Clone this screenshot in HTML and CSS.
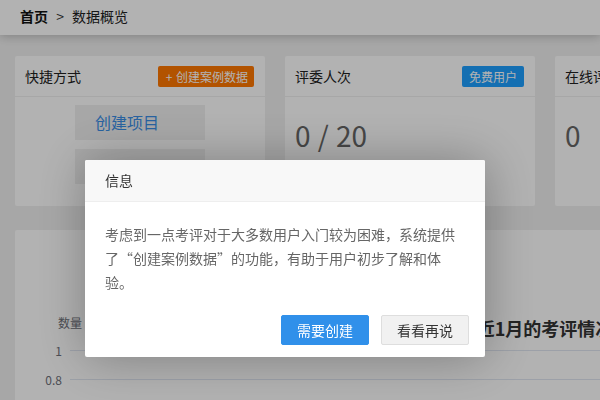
FILE: index.html
```html
<!DOCTYPE html>
<html lang="zh-CN">
<head>
<meta charset="utf-8">
<title>数据概览</title>
<link rel="stylesheet" href="styles.css">
</head>
<body>
<div class="topbar">
  <span class="crumb-home">首页</span>
  <span class="crumb-sep">&gt;</span>
  <span class="crumb-cur">数据概览</span>
</div>

<div class="main">
  <div class="cards">
    <div class="card">
      <div class="card-head">
        <span class="card-title">快捷方式</span>
        <span class="badge badge-orange">+ 创建案例数据</span>
      </div>
      <div class="quick">
        <div class="quick-btn">创建项目</div>
        <div class="quick-btn quick-btn-low">管理评委</div>
      </div>
    </div>
    <div class="card">
      <div class="card-head">
        <span class="card-title">评委人次</span>
        <span class="badge badge-blue">免费用户</span>
      </div>
      <div class="stat">0 / 20</div>
    </div>
    <div class="card">
      <div class="card-head">
        <span class="card-title">在线评委</span>
      </div>
      <div class="stat">0</div>
    </div>
    <div class="card">
      <div class="card-head">
        <span class="card-title">考评次数</span>
      </div>
      <div class="stat">0</div>
    </div>
  </div>

  <div class="chart-card">
    <div class="chart-top">
      <span class="y-name">数量</span>
      <span class="chart-title">最近1月的考评情况</span>
    </div>
    <div class="grid-row"><span class="y-label">1</span><span class="grid-line"></span></div>
    <div class="grid-row"><span class="y-label">0.8</span><span class="grid-line"></span></div>
    <div class="grid-row"><span class="y-label">0.6</span><span class="grid-line"></span></div>
  </div>
</div>

<div class="shade"></div>

<div class="dialog">
  <div class="dialog-title">信息</div>
  <div class="dialog-content">考虑到一点考评对于大多数用户入门较为困难，系统提供了“创建案例数据”的功能，有助于用户初步了解和体验。</div>
  <div class="dialog-btns">
    <span class="btn btn-primary">需要创建</span>
    <span class="btn btn-default">看看再说</span>
  </div>
</div>
</body>
</html>
```

FILE: styles.css
```css
html, body {
  margin: 0;
  padding: 0;
  overflow: hidden;
  width: 600px;
  height: 400px;
}

body {
  background: #f0f0f0;
  font-family: "Noto Sans CJK SC", "Noto Sans", sans-serif;
  font-size: 14px;
  color: #333;
}

.topbar {
  position: relative;
  z-index: 1;
  height: 35px;
  line-height: 33px;
  padding: 0 20px;
  background: #fff;
  box-shadow: 0 1px 10px rgba(0, 0, 0, 0.25);
  white-space: nowrap;
}

.crumb-home {
  font-weight: bold;
  color: #111;
}

.crumb-sep {
  margin: 0 5px;
  color: #333;
}

.crumb-cur {
  color: #222;
}

.main {
  width: 1040px;
  padding: 21px 15px;
}

.cards {
  display: flex;
  gap: 20px;
}

.card {
  flex: none;
  width: 250px;
  height: 150px;
  background: #fff;
  border-radius: 2px;
}

.card-head {
  height: 40px;
  border-bottom: 1px solid #f0f0f0;
  padding: 0 11px 0 10px;
  display: flex;
  align-items: center;
  justify-content: space-between;
}

.card-title {
  color: #222;
}

.badge {
  height: 21px;
  line-height: 21px;
  padding: 0 6px;
  font-size: 12px;
  color: #fff;
  border-radius: 2px;
}

.badge-orange {
  background: #ff7800;
  padding: 0 6px 0 8px;
  word-spacing: 1px;
}

.badge-blue {
  background: #1e9fff;
  padding: 0 7px;
}

.quick {
  display: flex;
  flex-direction: column;
  align-items: center;
  gap: 9px;
  padding-top: 8px;
}

.quick-btn {
  width: 110px;
  height: 35px;
  line-height: 35px;
  padding-left: 20px;
  background: #f0f0f0;
  color: #3a8ee6;
  font-size: 16px;
}

.quick-btn-low {
  line-height: 40px;
}

.stat {
  padding: 24px 10px 0;
  font-size: 28px;
  line-height: 28px;
  color: #666;
  word-spacing: 1px;
}

.chart-card {
  margin-top: 24px;
  width: 1040px;
  height: 320px;
  background: #fff;
  border-radius: 2px;
  padding-top: 86px;
  box-sizing: border-box;
}

.chart-top {
  height: 20px;
  display: grid;
  grid-template-columns: 1fr auto 1fr;
  align-items: start;
}

.y-name {
  grid-column: 1;
  justify-self: start;
  margin-left: 43px;
  font-size: 12px;
  line-height: 14px;
  color: #6e7079;
}

.chart-title {
  grid-column: 2;
  margin-left: 2px;
  font-size: 18px;
  line-height: 24px;
  font-weight: bold;
  color: #333;
}

.grid-row {
  height: 29px;
  display: flex;
  align-items: center;
  gap: 8px;
  padding-right: 40px;
}

.y-label {
  width: 47px;
  text-align: right;
  font-size: 12px;
  color: #6e7079;
}

.grid-line {
  flex: 1;
  height: 1px;
  background: #e0e6f1;
}

.shade {
  position: fixed;
  inset: 0;
  background: rgba(0, 0, 0, 0.3);
  z-index: 10;
}

.dialog {
  position: fixed;
  left: 85px;
  top: 160px;
  width: 400px;
  background: #fff;
  border-radius: 2px;
  box-shadow: 1px 1px 50px rgba(0, 0, 0, 0.3);
  z-index: 11;
}

.dialog-title {
  height: 41px;
  line-height: 41px;
  padding: 0 20px;
  background: #f8f8f8;
  border-bottom: 1px solid #eee;
  border-radius: 2px 2px 0 0;
  color: #333;
}

.dialog-content {
  padding: 20px;
  line-height: 24px;
  color: #666;
}

.dialog-btns {
  display: flex;
  justify-content: flex-end;
  gap: 12px;
  padding: 1px 16px 12px;
}

.btn {
  box-sizing: border-box;
  height: 30px;
  line-height: 28px;
  padding: 0 15px;
  border: 1px solid;
  border-radius: 2px;
  font-size: 14px;
}

.btn-primary {
  background: #3090ea;
  border-color: #3090ea;
  color: #fff;
}

.btn-default {
  background: #f1f1f1;
  border-color: #dedede;
  color: #333;
}
```
